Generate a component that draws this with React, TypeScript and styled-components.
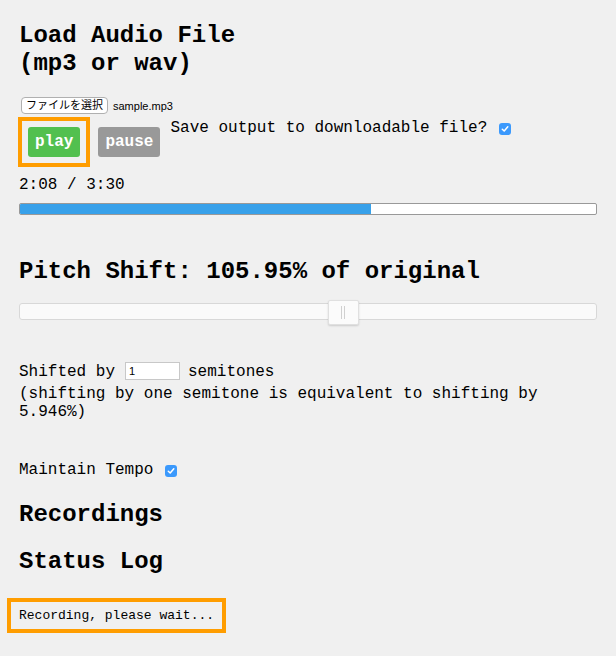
import React from "react";
import styled, { createGlobalStyle } from "styled-components";

const Global = createGlobalStyle`
  html, body { margin: 0; padding: 0; background: #f0f0f0; }
  body { font-family: "Liberation Mono", "Courier New", monospace; color: #000; }
`;

const Page = styled.div`
  padding: 22px 19px 20px 19px;
  display: flex;
  flex-direction: column;
`;

const Heading = styled.h2<{ $mt?: number; $mb?: number }>`
  font-family: "Liberation Mono", "Courier New", monospace;
  font-size: 24px;
  line-height: 28px;
  font-weight: bold;
  margin: ${(p) => p.$mt ?? 0}px 0 ${(p) => p.$mb ?? 0}px 0;
`;

const FileRow = styled.div`
  display: flex;
  align-items: center;
  gap: 5px;
  margin-top: 19px;
  margin-left: 2px;
  height: 17px;
`;

const FileButton = styled.button`
  font-family: "Liberation Sans", "Noto Sans CJK JP", sans-serif;
  font-size: 11px;
  height: 17px;
  padding: 0 4px;
  background: #fff;
  border: 1px solid #b0b0b0;
  border-radius: 4px;
  color: #000;
  line-height: 15px;
`;

const FileName = styled.span`
  font-family: "Liberation Sans", sans-serif;
  font-size: 11px;
`;

const ControlRow = styled.div`
  display: flex;
  align-items: flex-start;
  margin-top: 3px;
  margin-left: -1px;
`;

const Highlight = styled.div`
  border: 4px solid #ff9d00;
  padding: 6px;
  display: flex;
`;

const Btn = styled.button<{ $bg: string }>`
  font-family: "Liberation Mono", "Courier New", monospace;
  font-weight: bold;
  font-size: 16px;
  color: #fff;
  background: ${(p) => p.$bg};
  border: none;
  border-radius: 3px;
  height: 30px;
  padding: 0 7px;
  line-height: 30px;
`;

const PauseWrap = styled.div`
  margin-top: 10px;
  margin-left: 8px;
`;

const InlineText = styled.span`
  font-size: 16px;
  line-height: 20px;
  display: inline-flex;
  align-items: center;
  gap: 12px;
`;

const SaveText = styled(InlineText)`
  margin-left: 10px;
  margin-top: 1px;
`;

const Box = styled.span`
  display: inline-flex;
  width: 12px;
  height: 12px;
  border-radius: 3px;
  background: #3b99fc;
  align-items: center;
  justify-content: center;
  margin-top: 2px;
`;

const Check = () => (
  <Box>
    <svg width="8" height="8" viewBox="0 0 8 8">
      <path d="M1.3 4.2 L3.2 6 L6.8 1.8" fill="none" stroke="#fff" strokeWidth="1.5" strokeLinecap="round" strokeLinejoin="round" />
    </svg>
  </Box>
);

const Time = styled.div`
  font-size: 16px;
  line-height: 20px;
  margin-top: 8px;
`;

const Progress = styled.div`
  margin-top: 8px;
  height: 10px;
  border: 1px solid #999;
  border-radius: 2px;
  background: #fff;
  overflow: hidden;
`;

const Fill = styled.div`
  height: 100%;
  background: #38a1ea;
`;

const SliderTrack = styled.div`
  position: relative;
  margin-top: 17px;
  height: 15px;
  border: 1px solid #d8d8d8;
  border-radius: 3px;
  background: #fafafa;
`;

const Thumb = styled.div`
  position: absolute;
  top: -4px;
  width: 29px;
  height: 23px;
  margin-left: -15px;
  background: #fbfbfb;
  border: 1px solid #e0e0e0;
  border-radius: 2px;
  box-shadow: 0 1px 2px rgba(0, 0, 0, 0.15);
  display: flex;
  justify-content: center;
  align-items: center;
  gap: 2px;
`;

const Grip = styled.span`
  width: 1px;
  height: 13px;
  background: #d0d0d0;
`;

const TextBlock = styled.div<{ $mt: number }>`
  font-size: 16px;
  line-height: 18px;
  margin-top: ${(p) => p.$mt}px;
`;

const SemiInput = styled.input`
  width: 50px;
  height: 16px;
  border: 1px solid #c8c8c8;
  background: #fff;
  font-family: "Liberation Sans", sans-serif;
  font-size: 11px;
  padding: 0 0 0 3px;
  margin: 0 8px 0 10px;
  vertical-align: middle;
  position: relative;
  top: -1px;
`;

const Status = styled.div`
  margin-top: 22px;
  margin-left: -12px;
  align-self: flex-start;
  border: 4px solid #ff9d00;
  padding: 0 8px;
  font-size: 13px;
  line-height: 27px;
`;

export default function App() {
  return (
    <>
      <Global />
      <Page>
        <Heading>
          Load Audio File
          <br />
          (mp3 or wav)
        </Heading>
        <FileRow>
          <FileButton>ファイルを選択</FileButton>
          <FileName>sample.mp3</FileName>
        </FileRow>
        <ControlRow>
          <Highlight>
            <Btn $bg="#52c04f">play</Btn>
          </Highlight>
          <PauseWrap>
            <Btn $bg="#999999">pause</Btn>
          </PauseWrap>
          <SaveText>
            Save output to downloadable file?
            <Check />
          </SaveText>
        </ControlRow>
        <Time>2:08 / 3:30</Time>
        <Progress>
          <Fill style={{ width: `${(128 / 210) * 100}%` }} />
        </Progress>
        <Heading $mt={43}>Pitch Shift: 105.95% of original</Heading>
        <SliderTrack>
          <Thumb style={{ left: "56%" }}>
            <Grip />
            <Grip />
          </Thumb>
        </SliderTrack>
        <TextBlock $mt={43}>
          Shifted by
          <SemiInput defaultValue="1" />
          semitones
        </TextBlock>
        <TextBlock $mt={4}>
          (shifting by one semitone is equivalent to shifting by
          <br />
          5.946%)
        </TextBlock>
        <TextBlock $mt={39}>
          <InlineText>
            Maintain Tempo
            <Check />
          </InlineText>
        </TextBlock>
        <Heading $mt={21}>Recordings</Heading>
        <Heading $mt={19}>Status Log</Heading>
        <Status>Recording, please wait...</Status>
      </Page>
    </>
  );
}
